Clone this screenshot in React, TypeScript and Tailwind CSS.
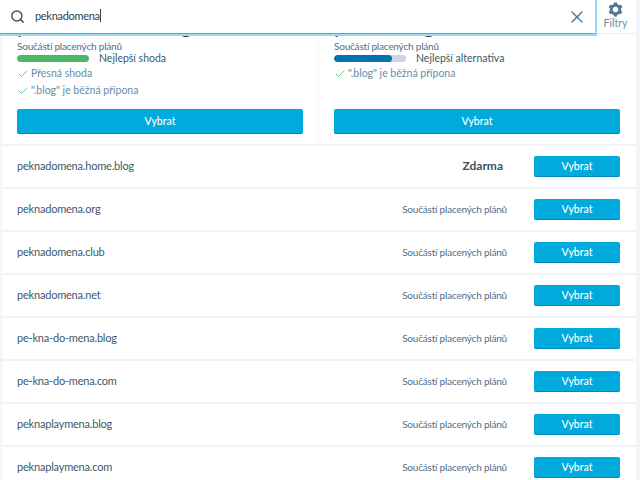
import { Search, X, Check } from "lucide-react";

const rows = [
  "peknadomena.org",
  "peknadomena.club",
  "peknadomena.net",
  "pe-kna-do-mena.blog",
  "pe-kna-do-mena.com",
  "peknaplaymena.blog",
  "peknaplaymena.com",
];

function Btn() {
  return (
    <button className="h-[21px] w-[86px] shrink-0 rounded-[2px] border-b border-b-[#0087be] bg-[#00aadc] pt-[1px] text-[10.5px] font-medium leading-none text-white">
      Vybrat
    </button>
  );
}

function Row({ name, free }: { name: string; free?: boolean }) {
  return (
    <div className="flex h-[43px] shrink-0 items-center border-b-2 border-b-[#eef3f7] bg-white pb-[1px] pl-[15px] pr-[16px]">
      <span className="flex-1 text-[11px] tracking-[-0.2px] text-[#3d596d]">{name}</span>
      {free ? (
        <span className="mr-[31px] text-[12px] font-bold text-[#3d4f5e]">Zdarma</span>
      ) : (
        <span className="mr-[27px] text-[10px] tracking-[-0.2px] text-[#4f6f87]">Součástí placených plánů</span>
      )}
      <Btn />
    </div>
  );
}

function Tick({ text }: { text: string }) {
  return (
    <div className="flex h-[17px] items-center gap-[2px] text-[10.5px] text-[#668eaa]">
      <Check className="h-[12px] w-[12px] text-[#4ab866]" strokeWidth={1.6} />
      <span>{text}</span>
    </div>
  );
}

function Card({
  title,
  barClass,
  barWidth,
  label,
  ticks,
  className,
}: {
  title: string;
  barClass: string;
  barWidth: string;
  label: string;
  ticks: string[];
  className: string;
}) {
  return (
    <div className={"flex min-w-0 flex-1 flex-col " + className}>
      <div className="-mt-[19px] h-[23px] text-[21px] leading-[20px] text-[#2e4453]">{title}</div>
      <div className="mt-[2px] text-[10px] leading-[12px] tracking-[-0.2px] text-[#4f6f87]">Součástí placených plánů</div>
      <div className="mt-[1px] flex h-[11px] items-center">
        <div className="h-[7px] w-[72px] overflow-hidden rounded-full bg-[#c8d7e1]">
          <div className={"h-full rounded-full " + barClass + " " + barWidth} />
        </div>
        <span className="ml-[10px] text-[10.5px] text-[#3d596d]">{label}</span>
      </div>
      <div className="mt-[1px] h-[43px]">
        {ticks.map((t) => (
          <Tick key={t} text={t} />
        ))}
      </div>
      <button className="mt-[1px] h-[25px] w-full rounded-[2px] border-b border-b-[#0087be] bg-[#00aadc] text-[10.5px] font-medium leading-none text-white">
        Vybrat
      </button>
    </div>
  );
}

export default function App() {
  return (
    <div className="flex h-[480px] w-[640px] flex-col overflow-hidden bg-[#f3f6f8] pl-[2px] pr-[4px] font-['Lato',sans-serif]">
      <div className="relative z-10 -ml-[2px] flex h-[34px] shrink-0 border-b border-b-[#e9eff3] bg-white">
        <div className="flex h-[34px] w-[595px] items-center border-b border-b-[#3fb5dc] bg-white pl-[10px] pr-[8px] shadow-[0_0_0_2px_#92dcf5]">
          <Search className="h-[15px] w-[15px] text-[#3d596d]" strokeWidth={2.4} />
          <span className="ml-[10px] flex-1 text-[11px] tracking-[-0.3px] text-[#2e4453]">
            peknadomena<span className="border-r border-[#2e4453]"></span>
          </span>
          <X className="h-[20px] w-[20px] text-[#537994]" strokeWidth={1.7} />
        </div>
        <div className="flex flex-1 flex-col items-center">
          <svg viewBox="0 0 24 24" className="mt-[1px] h-[17px] w-[17px] fill-[#537994]">
            <path d="M20 12c0-.568-.06-1.122-.174-1.656l1.834-1.612-2-3.464-2.322.786c-.82-.736-1.787-1.308-2.86-1.657L14 2h-4l-.48 2.396c-1.07.35-2.04.92-2.858 1.657L4.34 5.268l-2 3.464 1.834 1.612C4.06 10.878 4 11.432 4 12s.06 1.122.174 1.656L2.34 15.268l2 3.464 2.322-.786c.82.736 1.787 1.308 2.86 1.657L10 22h4l.48-2.396c1.07-.35 2.04-.92 2.858-1.657l2.322.786 2-3.464-1.834-1.612C19.94 13.122 20 12.568 20 12zm-8 4c-2.21 0-4-1.79-4-4s1.79-4 4-4 4 1.79 4 4-1.79 4-4 4z" />
          </svg>
          <span className="text-[10.5px] leading-[10px] text-[#668eaa]">Filtry</span>
        </div>
      </div>
      <div className="flex h-[112px] shrink-0 border-b-2 border-b-[#eef3f7] bg-white">
        <Card
          title="peknadomena.blog"
          barClass="bg-[#4ab866]"
          barWidth="w-full"
          label="Nejlepší shoda"
          ticks={["Přesná shoda", '".blog" je běžná přípona']}
          className="border-r border-r-[#f3f6f8] pl-[15px] pr-[15px]"
        />
        <Card
          title="pekna.blog"
          barClass="bg-[#0072b5]"
          barWidth="w-4/5"
          label="Nejlepší alternativa"
          ticks={['".blog" je běžná přípona']}
          className="pl-[15px] pr-[16px]"
        />
      </div>
      <Row name="peknadomena.home.blog" free />
      {rows.map((n) => (
        <Row key={n} name={n} />
      ))}
    </div>
  );
}
